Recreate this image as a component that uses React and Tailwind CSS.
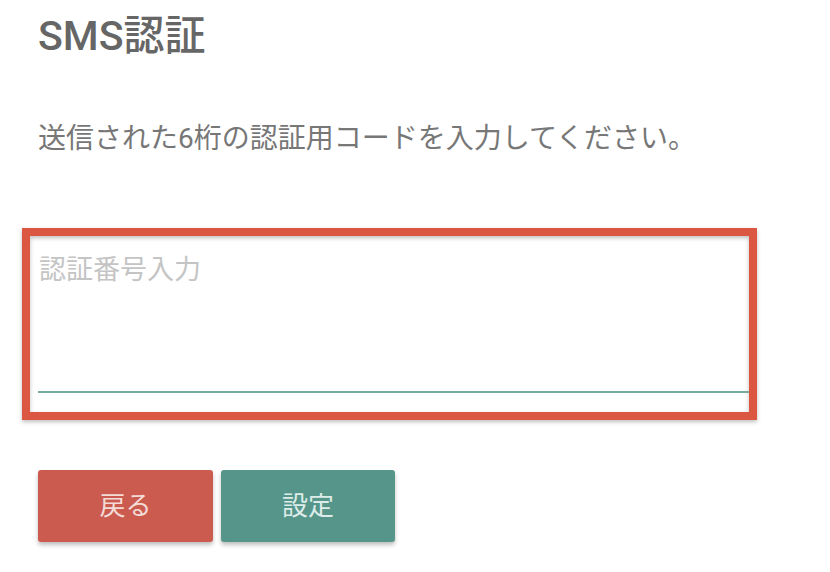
export default function App() {
  return (
    <div
      className="w-[830px] h-[572px] bg-white overflow-hidden text-[#666]"
      style={{ fontFamily: 'Roboto, "Noto Sans CJK JP", sans-serif' }}
    >
      <div className="pl-[38px] pt-[12px]">
        <h1 className="text-[41px] leading-[48px] font-medium text-[#666]">SMS認証</h1>
        <p className="mt-[59px] text-[28px] leading-[40px] text-[#777]">
          送信された6桁の認証用コードを入力してください。
        </p>
      </div>

      {/* code input, highlighted */}
      <div className="ml-[22px] mt-[69px] w-[735px] h-[192px] border-[8px] border-[#dc5741] shadow-[0_2px_4px_rgba(0,0,0,0.25),inset_0_2px_4px_rgba(0,0,0,0.25)] flex flex-col">
        <div className="ml-[8px] flex-1 flex flex-col">
          <div className="flex-1 pt-[14px] pl-[1px] text-[27px] leading-[40px] text-[#c4c4c4]">認証番号入力</div>
          <div className="h-[2px] bg-[#76ab9f] mb-[19px]" />
        </div>
      </div>

      <div className="pl-[38px] mt-[50px] flex gap-[8px]">
        <button className="w-[175px] h-[72px] rounded-[3px] bg-[#cc5b4f] text-[#f3dcd8] text-[26px] shadow-[0_3px_4px_rgba(0,0,0,0.25)]">
          戻る
        </button>
        <button className="w-[174px] h-[72px] rounded-[3px] bg-[#56958a] text-[#dcece8] text-[26px] shadow-[0_3px_4px_rgba(0,0,0,0.25)]">
          設定
        </button>
      </div>
    </div>
  );
}
